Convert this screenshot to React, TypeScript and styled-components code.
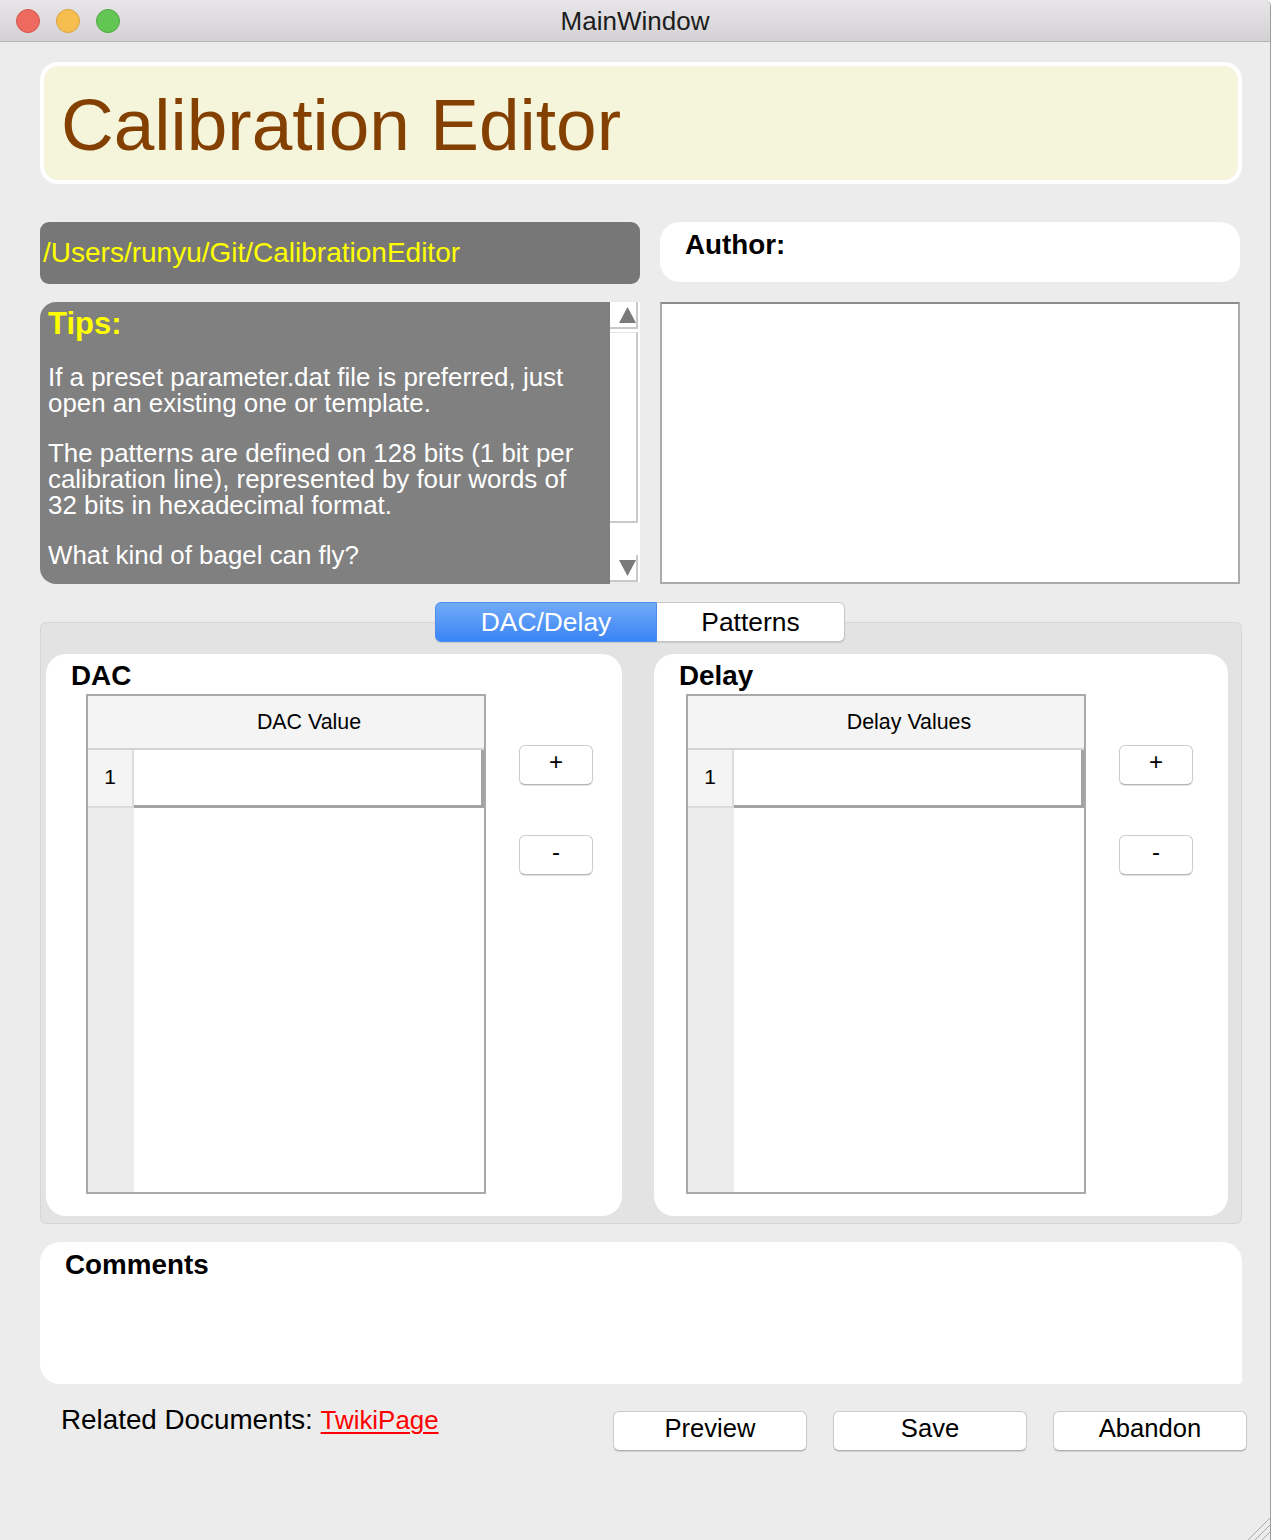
import React from "react";
import styled, { createGlobalStyle } from "styled-components";

const GlobalStyle = createGlobalStyle`
  html, body {
    margin: 0;
    padding: 0;
    background: #ffffff;
  }
  body {
    font-family: "Liberation Sans", Arial, Helvetica, sans-serif;
    color: #000;
  }
  * { box-sizing: border-box; }
`;

const Window = styled.div`
  width: 1271px;
  min-height: 1540px;
  background: #ececec;
  border-right: 1px solid #9d9d9d;
  border-top-right-radius: 6px;
  display: flex;
  flex-direction: column;
  position: relative;
  overflow: hidden;
`;

const TitleBar = styled.div`
  height: 42px;
  flex-shrink: 0;
  background: linear-gradient(#e8e6e8, #d3d1d3);
  border-bottom: 1px solid #b4b2b4;
  display: grid;
  grid-template-columns: 1fr auto 1fr;
  align-items: center;
`;

const Lights = styled.div`
  display: flex;
  gap: 16px;
  padding-left: 16px;
  align-items: center;
`;

const Light = styled.span<{ $fill: string; $edge: string }>`
  width: 24px;
  height: 24px;
  border-radius: 50%;
  background: ${(p) => p.$fill};
  border: 1px solid ${(p) => p.$edge};
`;

const WindowTitle = styled.div`
  font-size: 26px;
  color: #1c1c1c;
  font-family: "Liberation Sans", Arial, sans-serif;
  margin-top: 1px;
`;

const Body = styled.div`
  flex: 1;
  display: flex;
  flex-direction: column;
  padding: 20px 28px 0 40px;
`;

const Header = styled.div`
  height: 122px;
  background: #f5f5dc;
  border: 4px solid #ffffff;
  border-radius: 18px;
  display: flex;
  align-items: center;
  padding-left: 17px;
`;

const HeaderTitle = styled.h1`
  margin: 0;
  font-size: 73px;
  font-weight: 400;
  line-height: 1;
  color: #844000;
  padding-top: 2px;
`;

const TopGrid = styled.div`
  margin-top: 38px;
  display: grid;
  grid-template-columns: 600px 580px;
  grid-template-rows: 62px 282px;
  column-gap: 20px;
  row-gap: 18px;
`;

const PathBar = styled.div`
  background: #777777;
  border-radius: 9px;
  display: flex;
  align-items: center;
  padding-left: 3px;
  color: #ffff00;
  font-size: 28px;
`;

const AuthorBox = styled.div`
  height: 60px;
  background: #ffffff;
  border-radius: 20px;
  padding: 7px 25px 0;
`;

const BoldLabel = styled.div`
  font-weight: 700;
  font-size: 27.8px;
  line-height: 32px;
`;

const TipsFrame = styled.div`
  display: flex;
  background: #ececec;
`;

const TipsText = styled.div`
  flex: 1;
  background: #808080;
  border-radius: 16px 0 0 16px;
  padding: 4px 8px 0;
  color: #ffffff;
  overflow: hidden;
`;

const TipsHeading = styled.div`
  color: #ffff00;
  font-weight: 700;
  font-size: 31px;
  line-height: 36px;
  margin-bottom: 22px;
`;

const TipsPara = styled.p`
  margin: 0 0 24px;
  font-size: 25.9px;
  line-height: 26px;
  white-space: nowrap;
`;

const ScrollBar = styled.div`
  width: 30px;
  display: flex;
  flex-direction: column;
  background: #ffffff;
  height: 280px;
`;

const ScrollArrow = styled.div`
  height: 27px;
  display: flex;
  align-items: center;
  justify-content: center;
  border-right: 2px solid #c9c9c9;
  border-bottom: 2px solid #c9c9c9;
  margin-right: 2px;
  padding-left: 8px;
`;

const ScrollHandle = styled.div`
  height: 191px;
  margin: 3px 2px 0 0;
  border-right: 2px solid #c9c9c9;
  border-bottom: 2px solid #c9c9c9;
  border-top: 1px solid #e4e4e4;
`;

const ScrollTrack = styled.div`
  flex: 1;
`;

const NotesArea = styled.div`
  background: #ffffff;
  border: 2px solid #ababab;
  border-top-color: #8c8c8c;
`;

const TabWidget = styled.div`
  margin-top: 18px;
  display: flex;
  flex-direction: column;
`;

const TabBar = styled.div`
  display: flex;
  justify-content: center;
  position: relative;
  z-index: 1;
  padding-right: 2px;
`;

const Tab = styled.div<{ $active?: boolean; $width: number; $first?: boolean }>`
  width: ${(p) => p.$width}px;
  height: 40px;
  display: flex;
  align-items: center;
  justify-content: center;
  font-size: 26.4px;
  color: ${(p) => (p.$active ? "#ffffff" : "#000000")};
  background: ${(p) =>
    p.$active ? "linear-gradient(#72abf7, #3a84f7)" : "#ffffff"};
  border: 1px solid ${(p) => (p.$active ? "#4b8ef0" : "#c6c6c6")};
  border-left-width: ${(p) => (p.$first ? 1 : 0)}px;
  border-radius: ${(p) => (p.$first ? "6px 0 0 6px" : "0 6px 6px 0")};
  box-shadow: 0 1px 1px rgba(0, 0, 0, 0.12);
  padding-bottom: 0;
`;

const TabPane = styled.div`
  margin-top: -20px;
  background: #e3e3e3;
  border: 1px solid #d6d6d6;
  border-radius: 6px;
  padding: 31px 13px 7px 5px;
  display: grid;
  grid-template-columns: 576px 574px;
  column-gap: 32px;
`;

const Group = styled.div<{ $tableOffset: number }>`
  background: #ffffff;
  border-radius: 20px;
  height: 562px;
  padding: 6px 0 0 25px;
  display: grid;
  grid-template-columns: auto 1fr;
  grid-template-rows: 32px auto;
  row-gap: 2px;
  & > :nth-child(2) {
    margin-left: ${(p) => p.$tableOffset - 25}px;
  }
`;

const GroupTitle = styled(BoldLabel)`
  grid-column: 1 / span 2;
`;

const Table = styled.div`
  width: 400px;
  height: 500px;
  border: 2px solid #a9a9a9;
  display: flex;
  flex-direction: column;
  background: #ffffff;
`;

const TableHeader = styled.div`
  height: 54px;
  display: flex;
  background: #f4f4f4;
  border-bottom: 2px solid #d3d3d3;
`;

const Corner = styled.div`
  width: 46px;
`;

const ColumnHeader = styled.div`
  flex: 1;
  display: flex;
  align-items: center;
  justify-content: center;
  font-size: 21.4px;
  padding-bottom: 0;
`;

const Row = styled.div`
  height: 58px;
  display: flex;
`;

const RowNumber = styled.div`
  width: 46px;
  background: #f4f4f4;
  border-right: 2px solid #dcdcdc;
  border-bottom: 2px solid #dcdcdc;
  display: flex;
  align-items: center;
  justify-content: center;
  font-size: 21px;
  padding-bottom: 2px;
`;

const EditCell = styled.div`
  flex: 1;
  background: #ffffff;
  border-right: 3px solid #a3a3a3;
  border-bottom: 3px solid #a3a3a3;
`;

const Filler = styled.div`
  flex: 1;
  display: flex;
`;

const FillerGutter = styled.div`
  width: 46px;
  background: #ececec;
`;

const ButtonColumn = styled.div`
  margin-left: 33px;
  padding-top: 51px;
  display: flex;
  flex-direction: column;
  gap: 50px;
`;

const SmallButton = styled.button`
  width: 74px;
  height: 40px;
  background: #ffffff;
  border: 1px solid #cdcdcd;
  border-bottom-color: #b4b4b4;
  border-radius: 6px;
  box-shadow: 0 1px 1px rgba(0, 0, 0, 0.12);
  font-family: "Liberation Sans", Arial, sans-serif;
  font-size: 24px;
  color: #000;
  padding: 0 0 6px;
  line-height: 1;
`;

const CommentsBox = styled.div`
  margin-top: 18px;
  height: 142px;
  background: #ffffff;
  border-radius: 20px 20px 4px 20px;
  padding: 7px 25px 0;
`;

const Footer = styled.div`
  margin-top: 21px;
  margin-right: -5px;
  padding-left: 21px;
  display: flex;
  align-items: flex-start;
`;

const RelatedLabel = styled.div`
  font-size: 27.8px;
  line-height: 30px;
`;

const DocLink = styled.a`
  color: #ff0000;
  font-size: 25.9px;
  text-decoration: underline;
  text-decoration-thickness: 2px;
  text-underline-offset: 3px;
`;

const FooterButtons = styled.div`
  margin-left: auto;
  margin-top: 6px;
  display: flex;
  gap: 26px;
`;

const FooterButton = styled.button`
  width: 194px;
  height: 40px;
  background: #ffffff;
  border: 1px solid #cbcbcb;
  border-bottom-color: #b0b0b0;
  border-radius: 6px;
  box-shadow: 0 1px 1px rgba(0, 0, 0, 0.12);
  font-family: "Liberation Sans", Arial, sans-serif;
  font-size: 25.6px;
  color: #000;
  padding: 0 0 6px;
`;

const ResizeGrip = styled.svg`
  position: absolute;
  right: 0;
  bottom: 0;
`;

const Triangle = ({ down }: { down?: boolean }) => (
  <svg width="17" height="16" viewBox="0 0 17 16">
    <polygon
      points={down ? "0,0 17,0 8.5,16" : "8.5,0 17,16 0,16"}
      fill="#7a7a7a"
    />
  </svg>
);

const DataTable = ({ title }: { title: string }) => (
  <Table>
    <TableHeader>
      <Corner />
      <ColumnHeader>{title}</ColumnHeader>
    </TableHeader>
    <Row>
      <RowNumber>1</RowNumber>
      <EditCell />
    </Row>
    <Filler>
      <FillerGutter />
    </Filler>
  </Table>
);

const EditorGroup = ({
  label,
  column,
  offset,
}: {
  label: string;
  column: string;
  offset: number;
}) => (
  <Group $tableOffset={offset}>
    <GroupTitle>{label}</GroupTitle>
    <DataTable title={column} />
    <ButtonColumn>
      <SmallButton>+</SmallButton>
      <SmallButton>-</SmallButton>
    </ButtonColumn>
  </Group>
);

export default function App() {
  return (
    <>
      <GlobalStyle />
      <Window>
        <TitleBar>
          <Lights>
            <Light $fill="#ee6a5f" $edge="#d5554b" />
            <Light $fill="#f6be4f" $edge="#d9a23f" />
            <Light $fill="#62c554" $edge="#4ea83f" />
          </Lights>
          <WindowTitle>MainWindow</WindowTitle>
          <div />
        </TitleBar>
        <Body>
          <Header>
            <HeaderTitle>Calibration Editor</HeaderTitle>
          </Header>
          <TopGrid>
            <PathBar>/Users/runyu/Git/CalibrationEditor</PathBar>
            <AuthorBox>
              <BoldLabel>Author:</BoldLabel>
            </AuthorBox>
            <TipsFrame>
              <TipsText>
                <TipsHeading>Tips:</TipsHeading>
                <TipsPara>
                  If a preset parameter.dat file is preferred, just
                  <br />
                  open an existing one or template.
                </TipsPara>
                <TipsPara>
                  The patterns are defined on 128 bits (1 bit per
                  <br />
                  calibration line), represented by four words of
                  <br />
                  32 bits in hexadecimal format.
                </TipsPara>
                <TipsPara>What kind of bagel can fly?</TipsPara>
              </TipsText>
              <ScrollBar>
                <ScrollArrow>
                  <Triangle />
                </ScrollArrow>
                <ScrollHandle />
                <ScrollTrack />
                <ScrollArrow>
                  <Triangle down />
                </ScrollArrow>
              </ScrollBar>
            </TipsFrame>
            <NotesArea />
          </TopGrid>
          <TabWidget>
            <TabBar>
              <Tab $active $first $width={222}>
                DAC/Delay
              </Tab>
              <Tab $width={188}>Patterns</Tab>
            </TabBar>
            <TabPane>
              <EditorGroup label="DAC" column="DAC Value" offset={40} />
              <EditorGroup label="Delay" column="Delay Values" offset={32} />
            </TabPane>
          </TabWidget>
          <CommentsBox>
            <BoldLabel>Comments</BoldLabel>
          </CommentsBox>
          <Footer>
            <RelatedLabel>
              Related Documents: <DocLink href="#">TwikiPage</DocLink>
            </RelatedLabel>
            <FooterButtons>
              <FooterButton>Preview</FooterButton>
              <FooterButton>Save</FooterButton>
              <FooterButton>Abandon</FooterButton>
            </FooterButtons>
          </Footer>
        </Body>
        <ResizeGrip width="24" height="26" viewBox="0 0 24 26">
          <line x1="2" y1="26" x2="24" y2="4" stroke="#a8a8a8" strokeWidth="1" />
          <line x1="9" y1="26" x2="24" y2="11" stroke="#a8a8a8" strokeWidth="1" />
          <line x1="16" y1="26" x2="24" y2="18" stroke="#a8a8a8" strokeWidth="1" />
        </ResizeGrip>
      </Window>
    </>
  );
}
